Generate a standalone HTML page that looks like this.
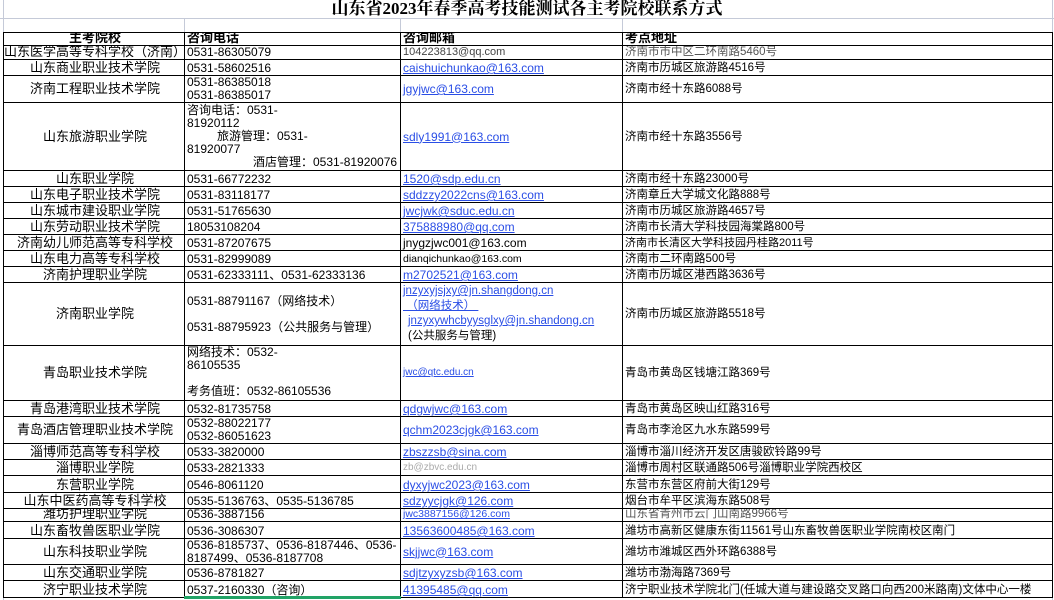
<!DOCTYPE html>
<html><head><meta charset="utf-8"><style>
body{margin:0;width:1054px;height:600px;background:#fff;position:relative;overflow:hidden;font-family:"Liberation Sans","Noto Sans CJK SC",sans-serif;font-size:12px;color:#000}
.title{position:absolute;top:-1px;left:0;width:1054px;text-align:center;font-size:17px;font-weight:bold;font-family:"Liberation Serif","Noto Serif CJK SC",serif;line-height:20px}
.g{position:absolute;background:#c5cad8}
.r{position:absolute;left:3px;width:1050px;display:flex;border-bottom:1px solid #000;box-sizing:border-box;overflow:hidden}
.c{box-sizing:border-box;border-left:1px solid #000;display:flex;align-items:flex-end;line-height:14px;overflow:hidden;padding-left:2px;white-space:nowrap}
.c1{width:181px;justify-content:center;font-size:13px}
.c2{width:216px;font-size:12px}
.c3{width:222px}
.c4{width:431px;border-right:1px solid #000;font-size:11.5px}
.m{align-items:center}
a,.a{color:#2a4ee6;text-decoration:underline}
.h{font-weight:bold;font-size:13px;align-items:flex-end}
.col{align-items:center}
.col>div{line-height:13px}
</style></head><body>
<div class="g" style="left:3px;top:0;width:1px;height:600px"></div>
<div class="g" style="left:1052px;top:0;width:1px;height:600px"></div>
<div class="g" style="left:0;top:18px;width:1054px;height:1px"></div>
<div class="g" style="left:184px;top:18px;width:1px;height:14px"></div>
<div class="g" style="left:400px;top:18px;width:1px;height:14px"></div>
<div class="g" style="left:622px;top:18px;width:1px;height:14px"></div>
<div class="title">山东省2023年春季高考技能测试各主考院校联系方式</div>
<div class="r" style="top:32px;height:14px;border-top:1px solid #000">
<div class="c c1 h">主考院校</div><div class="c c2 h">咨询电话</div><div class="c c3 h">咨询邮箱</div><div class="c c4 h">考点地址</div></div>
<div class="r" style="top:46px;height:14px"><div class="c c1">山东医学高等专科学校（济南）</div><div class="c c2">0531-86305079</div><div class="c c3" style="color:#444;font-size:11px">104223813@qq.com</div><div class="c c4" style="color:#555">济南市市中区二环南路5460号</div></div>
<div class="r" style="top:60px;height:16px"><div class="c c1">山东商业职业技术学院</div><div class="c c2">0531-58602516</div><div class="c c3"><a>caishuichunkao@163.com</a></div><div class="c c4">济南市历城区旅游路4516号</div></div>
<div class="r" style="top:76px;height:27px"><div class="c c1 m">济南工程职业技术学院</div><div class="c c2 col"><div>0531-86385018<br>0531-86385017</div></div><div class="c c3 m"><a>jgyjwc@163.com</a></div><div class="c c4 m">济南市经十东路6088号</div></div>
<div class="r" style="top:103px;height:68px"><div class="c c1 m">山东旅游职业学院</div><div class="c c2 col"><div>咨询电话：0531-<br>81920112<br><span style="padding-left:30px">旅游管理：0531-</span><br>81920077<br><span style="padding-left:66px">酒店管理：0531-81920076</span></div></div><div class="c c3 m"><a>sdly1991@163.com</a></div><div class="c c4 m">济南市经十东路3556号</div></div>
<div class="r" style="top:171px;height:16px"><div class="c c1">山东职业学院</div><div class="c c2">0531-66772232</div><div class="c c3"><a>1520@sdp.edu.cn</a></div><div class="c c4">济南市经十东路23000号</div></div>
<div class="r" style="top:187px;height:16px"><div class="c c1">山东电子职业技术学院</div><div class="c c2">0531-83118177</div><div class="c c3"><a>sddzzy2022cns@163.com</a></div><div class="c c4">济南章丘大学城文化路888号</div></div>
<div class="r" style="top:203px;height:16px"><div class="c c1">山东城市建设职业学院</div><div class="c c2">0531-51765630</div><div class="c c3"><a>jwcjwk@sduc.edu.cn</a></div><div class="c c4">济南市历城区旅游路4657号</div></div>
<div class="r" style="top:219px;height:16px"><div class="c c1">山东劳动职业技术学院</div><div class="c c2">18053108204</div><div class="c c3"><a>375888980@qq.com</a></div><div class="c c4">济南市长清大学科技园海棠路800号</div></div>
<div class="r" style="top:235px;height:16px"><div class="c c1">济南幼儿师范高等专科学校</div><div class="c c2">0531-87207675</div><div class="c c3">jnygzjwc001@163.com</div><div class="c c4" style="font-size:11px">济南市长清区大学科技园丹桂路2011号</div></div>
<div class="r" style="top:251px;height:16px"><div class="c c1">山东电力高等专科学校</div><div class="c c2">0531-82999089</div><div class="c c3" style="font-size:10.5px">dianqichunkao@163.com</div><div class="c c4">济南市二环南路500号</div></div>
<div class="r" style="top:267px;height:16px"><div class="c c1">济南护理职业学院</div><div class="c c2">0531-62333111、0531-62333136</div><div class="c c3"><a>m2702521@163.com</a></div><div class="c c4">济南市历城区港西路3636号</div></div>
<div class="r" style="top:283px;height:63px"><div class="c c1 m">济南职业学院</div><div class="c c2 col"><div>0531-88791167（网络技术）<br><br>0531-88795923（公共服务与管理）</div></div><div class="c c3 col" style="font-size:11.5px"><div style="line-height:15px"><a>jnzyxyjsjxy@jn.shangdong.cn</a><br><span class="a">&nbsp;（网络技术）&nbsp;</span><br><a style="margin-left:5px">jnzyxywhcbyysglxy@jn.shandong.cn</a><br><span style="margin-left:5px">(公共服务与管理)</span></div></div><div class="c c4 m">济南市历城区旅游路5518号</div></div>
<div class="r" style="top:346px;height:55px"><div class="c c1 m">青岛职业技术学院</div><div class="c c2" style="align-items:flex-start"><div style="line-height:13px">网络技术：0532-<br>86105535<br><br>考务值班：0532-86105536</div></div><div class="c c3 m"><a style="font-size:10px">jwc@qtc.edu.cn</a></div><div class="c c4 m">青岛市黄岛区钱塘江路369号</div></div>
<div class="r" style="top:401px;height:16px"><div class="c c1">青岛港湾职业技术学院</div><div class="c c2">0532-81735758</div><div class="c c3"><a>qdgwjwc@163.com</a></div><div class="c c4">青岛市黄岛区映山红路316号</div></div>
<div class="r" style="top:417px;height:27px"><div class="c c1 m">青岛酒店管理职业技术学院</div><div class="c c2 col"><div>0532-88022177<br>0532-86051623</div></div><div class="c c3 m"><a>qchm2023cjgk@163.com</a></div><div class="c c4 m">青岛市李沧区九水东路599号</div></div>
<div class="r" style="top:444px;height:16px"><div class="c c1">淄博师范高等专科学校</div><div class="c c2">0533-3820000</div><div class="c c3"><a>zbszzsb@sina.com</a></div><div class="c c4">淄博市淄川经济开发区唐骏欧铃路99号</div></div>
<div class="r" style="top:460px;height:16px"><div class="c c1">淄博职业学院</div><div class="c c2">0533-2821333</div><div class="c c3" style="color:#aaa;font-size:10px">zb@zbvc.edu.cn</div><div class="c c4">淄博市周村区联通路506号淄博职业学院西校区</div></div>
<div class="r" style="top:476px;height:17px"><div class="c c1">东营职业学院</div><div class="c c2">0546-8061120</div><div class="c c3"><a>dyxyjwc2023@163.com</a></div><div class="c c4">东营市东营区府前大街129号</div></div>
<div class="r" style="top:493px;height:16px"><div class="c c1">山东中医药高等专科学校</div><div class="c c2">0535-5136763、0535-5136785</div><div class="c c3"><a>sdzyycjgk@126.com</a></div><div class="c c4">烟台市牟平区滨海东路508号</div></div>
<div class="r" style="top:509px;height:13px"><div class="c c1">潍坊护理职业学院</div><div class="c c2">0536-3887156</div><div class="c c3"><a style="font-size:10.5px">jwc3887156@126.com</a></div><div class="c c4" style="color:#555">山东省青州市云门山南路9966号</div></div>
<div class="r" style="top:522px;height:17px"><div class="c c1">山东畜牧兽医职业学院</div><div class="c c2">0536-3086307</div><div class="c c3"><a>13563600485@163.com</a></div><div class="c c4">潍坊市高新区健康东街11561号山东畜牧兽医职业学院南校区南门</div></div>
<div class="r" style="top:539px;height:26px"><div class="c c1 m">山东科技职业学院</div><div class="c c2 col"><div>0536-8185737、0536-8187446、0536-<br>8187499、0536-8187708</div></div><div class="c c3 m"><a>skjjwc@163.com</a></div><div class="c c4 m">潍坊市潍城区西外环路6388号</div></div>
<div class="r" style="top:565px;height:16px"><div class="c c1">山东交通职业学院</div><div class="c c2">0536-8781827</div><div class="c c3"><a>sdjtzyxyzsb@163.com</a></div><div class="c c4">潍坊市渤海路7369号</div></div>
<div class="r" style="top:581px;height:17px"><div class="c c1">济宁职业技术学院</div><div class="c c2">0537-2160330（咨询）</div><div class="c c3"><a>41395485@qq.com</a></div><div class="c c4">济宁职业技术学院北门(任城大道与建设路交叉路口向西200米路南)文体中心一楼</div></div>
<div style="position:absolute;left:184px;top:596px;width:217px;height:3px;background:#21a366"></div>
</body></html>
